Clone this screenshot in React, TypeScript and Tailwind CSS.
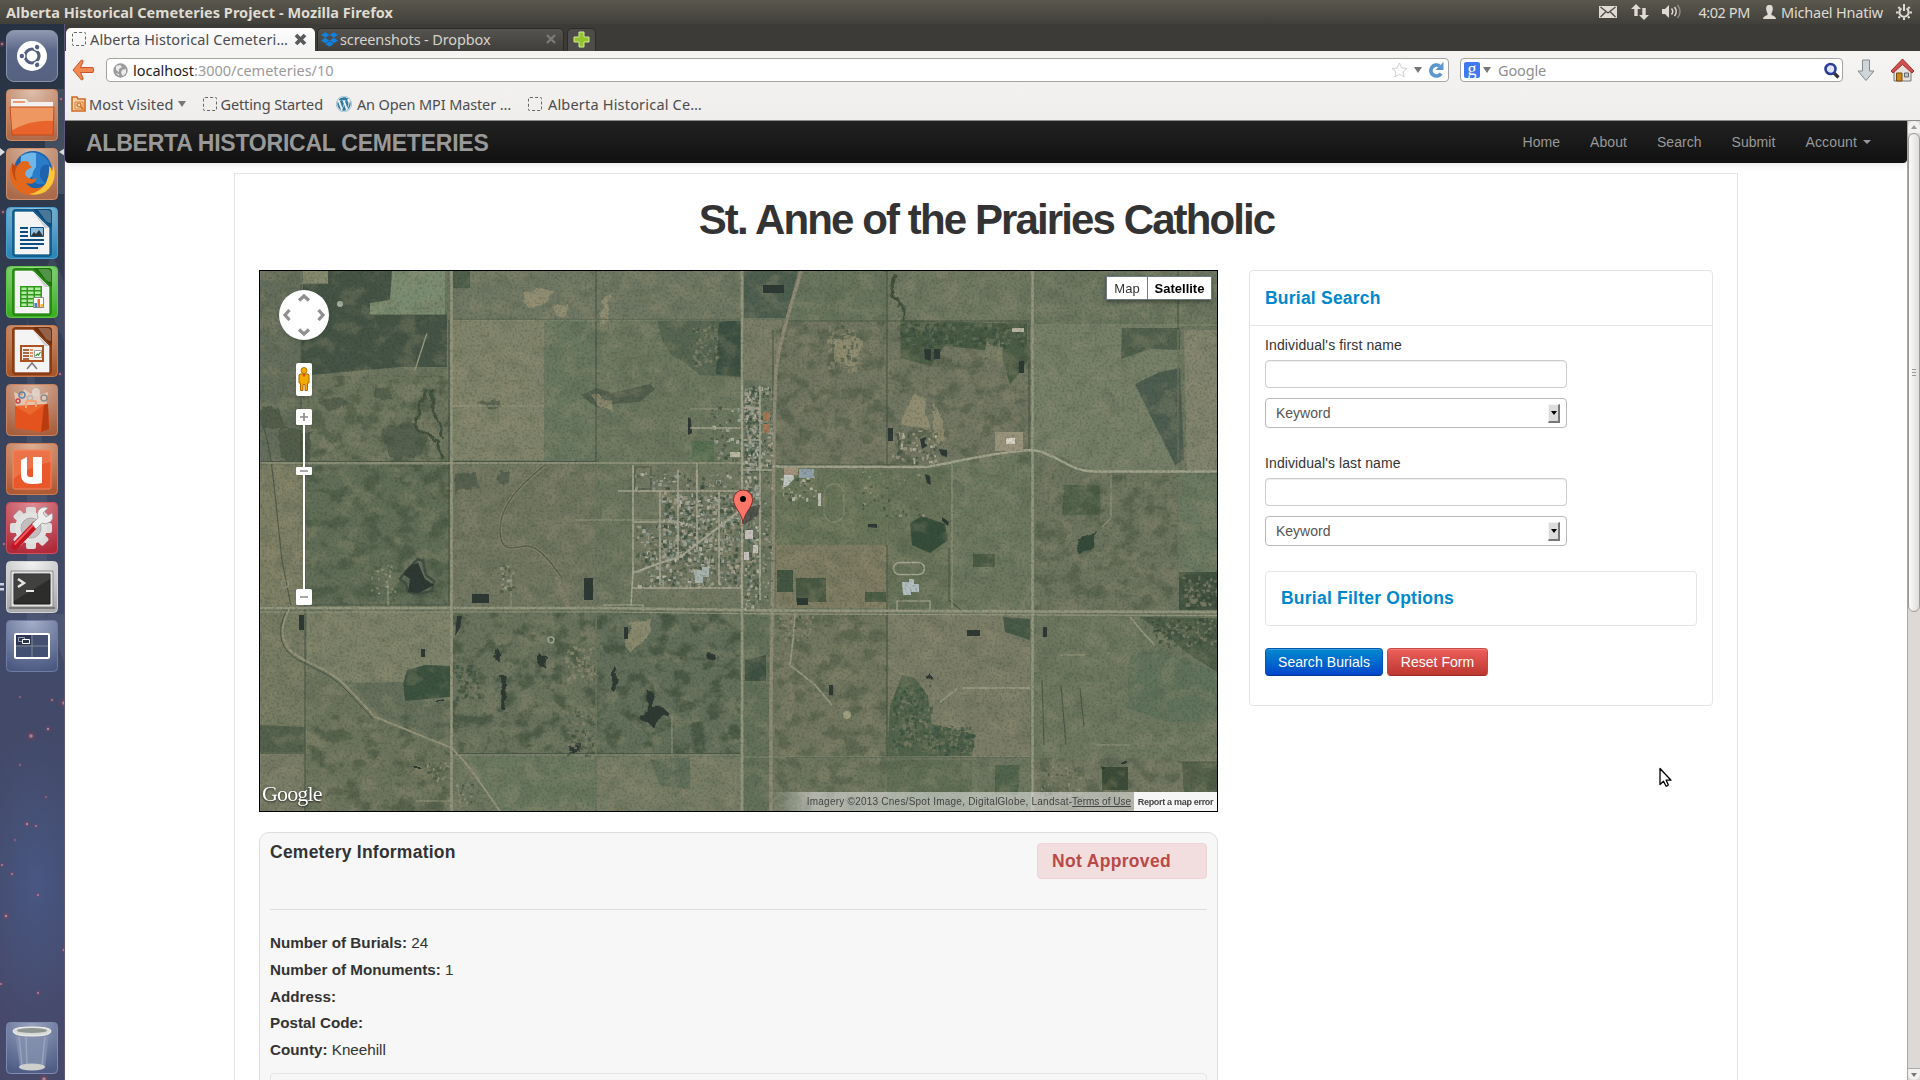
import type { ReactNode } from 'react';
import { FaDropbox, FaWordpress } from 'react-icons/fa';

/* ---------- deterministic pseudo random numbers for the aerial texture ---------- */
function rng(seed: number) {
  let s = seed;
  return () => {
    s = (s * 1664525 + 1013904223) % 4294967296;
    return s / 4294967296;
  };
}

type Blob = { x: number; y: number; w: number; h: number; c: string };

function scatter(seed: number, n: number, x0: number, y0: number, x1: number, y1: number, colors: string[], max = 4): Blob[] {
  const r = rng(seed);
  return Array.from({ length: n }, () => ({
    x: x0 + r() * (x1 - x0),
    y: y0 + r() * (y1 - y0),
    w: 1.2 + r() * (max - 1.2),
    h: 1.2 + r() * (max - 1.2),
    c: colors[Math.floor(r() * colors.length)],
  }));
}

const town = ['#c9c8c0', '#a9aba2', '#8f8f80', '#34483a', '#2f4235', '#3f5543', '#b3a796', '#8fa09c', '#4b5a48'];
const houses: Blob[] = [
  ...scatter(7, 520, 661, 493, 741, 560, town, 4),
  ...scatter(11, 190, 634, 525, 690, 586, town, 4),
  ...scatter(12, 110, 690, 555, 741, 586, town, 4),
  ...scatter(13, 70, 634, 471, 741, 491, town, 4),
  ...scatter(17, 330, 744, 386, 760, 470, town, 4),
  ...scatter(18, 60, 762, 386, 771, 470, town, 4),
  ...scatter(19, 170, 744, 471, 758, 608, town, 4),
  ...scatter(23, 50, 762, 471, 771, 608, town, 3),
  ...scatter(29, 40, 710, 405, 740, 462, town, 4),
  ...scatter(31, 70, 892, 430, 935, 462, ['#c9c2b0', '#39493b', '#a9a08c', '#7d7a66'], 4),
  ...scatter(37, 50, 780, 468, 815, 500, ['#c9c8c0', '#34483a', '#a9a08c'], 4),
  ...scatter(41, 50, 855, 470, 925, 515, ['#a39b84', '#34483a', '#56704f', '#7f8068'], 3.5),
  ...scatter(43, 30, 370, 565, 396, 595, ['#a9aba2', '#3f4f3f', '#8f8f70'], 3),
  ...scatter(47, 25, 500, 563, 512, 590, ['#a9aba2', '#3f4f3f', '#8f8f70'], 4),
  ...scatter(53, 60, 776, 615, 812, 640, ['#8f8c78', '#3f4f3f', '#7f8068'], 3),
  ...scatter(59, 30, 425, 762, 450, 780, ['#9f9582', '#3f4f3f', '#7f7f66'], 3),
  ...scatter(61, 30, 454, 775, 472, 805, ['#9f9582', '#3f4f3f', '#7f7f66'], 3),
  ...scatter(67, 50, 1040, 765, 1080, 795, ['#928f7c', '#3f4f3f', '#777a60'], 3),
  ...scatter(71, 80, 827, 325, 860, 370, ['#8f896e', '#85856b', '#4b5b46'], 5),
  ...scatter(73, 70, 690, 325, 716, 365, ['#84846b', '#777a64', '#3f4f3f'], 4),
  ...scatter(79, 160, 1150, 618, 1216, 645, ['#2f4232', '#3a4d3a', '#7b7c66'], 4),
  ...scatter(83, 160, 1182, 575, 1217, 607, ['#2b3f2f', '#38493a', '#7b7b66'], 4),
  ...scatter(89, 160, 892, 685, 930, 750, ['#2f4a38', '#3a503d', '#75775f'], 4),
  ...scatter(97, 130, 930, 725, 973, 752, ['#2f4a38', '#3a503d', '#75775f'], 4),
  ...scatter(101, 80, 453, 665, 480, 700, ['#35493a', '#3f5543', '#75775f'], 4),
  ...scatter(103, 60, 565, 645, 594, 678, ['#84836b', '#4f5f4c', '#8f8a72'], 4),
  ...scatter(107, 60, 565, 710, 594, 760, ['#84836b', '#3c4c3c', '#777a64'], 4),
  ...scatter(109, 200, 900, 322, 1026, 345, ['#2f4634', '#3d523f', '#5f6c56'], 5),
];

const fields: [string, string][] = [
  ['260,271 300,271 300,462 260,462', '#5f6957'],
  ['303,284 328,284 328,271 392,271 392,300 370,312 370,314 447,315 447,367 400,367 310,375 301,372', '#3b4c3e'],
  ['392,271 445,271 445,315 370,315 370,303 390,300', '#788c6f'],
  ['303,271 328,271 328,283 303,283', '#858a6d'],
  ['303,376 450,368 450,462 303,462', '#67705a'],
  ['260,465 303,465 303,606 260,606', '#7b7d62'],
  ['307,465 450,465 450,605 307,605', '#5a6852'],
  ['453,271 742,271 742,318 453,318', '#6c7561'],
  ['453,271 470,271 470,288 453,288', '#465845'],
  ['453,320 544,320 544,460 453,460', '#7e8268'],
  ['545,320 596,320 596,462 545,462', '#64745d'],
  ['597,320 742,320 742,462 597,462', '#67735c'],
  ['657,320 742,320 742,377 700,375 684,362 672,356 662,340', '#4f604c'],
  ['719,322 742,320 742,377 716,374', '#31473a'],
  ['581,395 597,388 612,393 650,384 655,389 640,402 612,404 597,408', '#4b5847'],
  ['453,465 596,465 596,605 453,605', '#6c725d'],
  ['597,465 632,465 632,605 597,605', '#66715b'],
  ['633,465 742,465 742,605 633,605', '#6d745f'],
  ['692,441 714,441 714,462 692,462', '#4e6a4c'],
  ['744,271 798,271 786,318 744,318', '#46584a'],
  ['744,320 782,320 774,380 744,380', '#767a63'],
  ['802,271 887,271 887,320 785,320', '#627059'],
  ['782,322 887,322 887,465 776,465', '#6c715d'],
  ['888,271 1031,271 1031,320 888,320', '#6c755f'],
  ['888,322 1031,322 1031,452 925,466 888,466', '#6d725e'],
  ['900,320 1027,324 1028,360 1010,385 1001,352 945,346 930,366 901,358', '#43563f'],
  ['987,338 1004,341 1001,362 984,357', '#767b61'],
  ['1034,271 1217,271 1217,324 1034,324', '#67735d'],
  ['1034,326 1178,326 1178,470 1090,470 1060,456 1034,450', '#727c65'],
  ['1122,328 1180,328 1180,350 1150,349 1121,359', '#485a47'],
  ['1135,384 1160,372 1180,368 1184,460 1175,465 1155,425', '#45574a'],
  ['1184,330 1217,330 1217,470 1187,470', '#7f826b'],
  ['776,470 887,470 887,545 776,545', '#637154'],
  ['776,545 887,545 887,608 776,608', '#7b795f'],
  ['888,470 951,468 951,608 888,608', '#616e54'],
  ['953,462 1030,452 1030,610 953,610', '#68745d'],
  ['1035,455 1085,473 1178,473 1178,610 1035,610', '#68705b'],
  ['1179,475 1217,475 1217,572 1179,572', '#67765f'],
  ['1179,572 1217,572 1217,610 1179,610', '#3a4c3a'],
  ['910,523 922,516 945,524 948,540 930,553 912,545', '#2b4432'],
  ['777,570 793,570 793,592 777,592', '#3a4f3b'],
  ['796,578 826,578 826,602 796,602', '#40523c'],
  ['865,592 886,592 886,602 865,602', '#44573f'],
  ['973,554 995,554 995,567 973,567', '#41543e'],
  ['1064,485 1100,485 1100,515 1062,515', '#4c5e47'],
  ['260,612 305,612 305,752 260,752', '#73795f'],
  ['307,612 450,612 450,700 340,680 307,660', '#7a7f66'],
  ['307,668 345,690 375,718 450,750 450,812 307,812', '#687059'],
  ['350,683 403,682 403,700 450,702 450,742 380,715', '#5f6b57'],
  ['407,670 425,665 450,666 450,697 405,701 403,684', '#324b38'],
  ['260,725 305,727 305,752 260,752', '#4b5b47'],
  ['260,754 305,754 305,812 260,812', '#777a64'],
  ['453,612 596,612 596,753 453,753', '#646e59'],
  ['597,612 742,612 742,753 597,753', '#5c6a56'],
  ['453,757 596,757 596,812 500,812 470,770', '#66755d'],
  ['597,757 742,757 742,812 597,812', '#747a62'],
  ['650,760 690,757 690,790 660,785', '#5b6b56'],
  ['744,615 769,615 769,812 744,812', '#5d6c56'],
  ['745,660 766,655 766,681 745,681', '#35493a'],
  ['775,612 886,612 886,755 775,755', '#6d725b'],
  ['888,615 1030,615 1030,757 888,757', '#787a64'],
  ['1003,617 1030,619 1030,640 1005,632', '#3d5340'],
  ['902,675 915,678 928,696 932,724 975,735 972,756 887,757 890,706', '#4b5e47'],
  ['775,758 886,758 886,812 775,812', '#69715b'],
  ['887,760 972,760 972,812 887,812', '#5c6b52'],
  ['995,765 1020,765 1018,795 995,795', '#4a5f48'],
  ['1034,615 1217,615 1217,760 1034,760', '#68735c'],
  ['1130,655 1160,650 1217,672 1217,722 1170,722 1127,708', '#5b6e58'],
  ['1140,617 1217,618 1217,672 1190,655 1165,635', '#465843'],
  ['1034,760 1217,760 1217,812 1034,812', '#6f745f'],
  ['1102,767 1128,767 1128,790 1102,790', '#31432f'],
  ['1182,762 1217,762 1217,795 1184,795', '#4f5d47'],
];

const ponds = [
  'M418,563l7,16 9,6-15,8-11-1 2-13-7-5 8-9z',
  'M472,594h17v9h-17z', 'M584,578h9v22h-9z', 'M688,417l3,2 1,14-4,2z', 'M763,285h21v8h-21z',
  'M934,349h6v10h-6z', 'M924,349h7v12l-6-2z', 'M1019,361h5v12h-5z', 'M888,428h5v13h-5z', 'M920,439l6-2 1,9-5,3z', 'M939,449l8,1v7l-6-2z',
  'M925,474l5,2 1,9-4-2z', 'M868,524l9,0 0,4-9-1z', 'M797,598h11v7h-11z', 'M942,517l7,5-1,4-6-5z',
  'M299,615h5v15h-5z', 'M457,616l5,0-2,12-5,8z', 'M421,649h4v8h-4z', 'M624,627h4v12h-4z', 'M967,630h13v6h-13z', 'M1043,627h4v10h-4z',
  'M829,685h4v10h-4z', 'M925,676l5-4 3,6-6,3z', 'M646,690l7,2 1,14 9,2 6,5-8,5-6,8-10,-4-5-4 7-8z', 'M499,675l6,1 2,14-2,20-4-2 1-20z',
  'M570,745l9-2-2,8-9,4z', 'M496,650l6,4-3,9-5-5z', 'M540,655l7,1-2,12-6-2z', 'M613,665l4,10-2,18-4-4z', 'M706,655l10-2 1,6-9,1z',
  'M435,700h9v2h-9z', 'M412,767h7v2h-7z', 'M1121,762h7v3h-7z', 'M1102,767l5,2-4,2z',
];

function Aerial() {
  const road = '#94967d';
  return (
    <svg className="block" width="957" height="540" viewBox="260 271 957 540">
      <defs>
        <filter id="blotch" x="0" y="0" width="100%" height="100%" colorInterpolationFilters="sRGB">
          <feTurbulence type="fractalNoise" baseFrequency="0.058 0.07" numOctaves="5" seed="8" />
          <feColorMatrix values="0 0 0 0 .2  0 0 0 0 .28  0 0 0 0 .2  5 0 0 0 -2.5" />
        </filter>
        <filter id="tan" x="0" y="0" width="100%" height="100%" colorInterpolationFilters="sRGB">
          <feTurbulence type="fractalNoise" baseFrequency="0.05 0.06" numOctaves="5" seed="31" />
          <feColorMatrix values="0 0 0 0 .6  0 0 0 0 .57  0 0 0 0 .45  0 4.5 0 0 -2.2" />
        </filter>
        <filter id="grain" x="0" y="0" width="100%" height="100%" colorInterpolationFilters="sRGB">
          <feTurbulence type="fractalNoise" baseFrequency="0.4" numOctaves="3" seed="3" />
          <feColorMatrix values="0 0 0 0 .12  0 0 0 0 .17  0 0 0 0 .12  4 0 0 0 -1.9" />
        </filter>
        <filter id="rough" x="-5%" y="-5%" width="110%" height="110%">
          <feTurbulence type="fractalNoise" baseFrequency="0.09" numOctaves="3" seed="5" result="n" />
          <feDisplacementMap in="SourceGraphic" in2="n" scale="9" xChannelSelector="R" yChannelSelector="G" />
        </filter>
        <linearGradient id="credit" x1="0" x2="1">
          <stop offset="0" stopColor="#f5f5f5" stopOpacity="0" />
          <stop offset=".12" stopColor="#f5f5f5" stopOpacity=".5" />
          <stop offset="1" stopColor="#f5f5f5" stopOpacity=".5" />
        </linearGradient>
      </defs>
      <rect x="260" y="271" width="957" height="540" fill="#67725c" />
      {fields.map(([p, c]) => <polygon key={p} points={p} fill={c} />)}
      <rect x="260" y="271" width="957" height="540" filter="url(#tan)" opacity=".28" />
      <rect x="260" y="271" width="957" height="540" filter="url(#blotch)" opacity=".13" />
      <g opacity=".4"><rect x="307" y="465" width="143" height="140" filter="url(#blotch)" /></g>
      <g opacity=".55"><rect x="453" y="612" width="143" height="141" filter="url(#blotch)" /></g>
      <g opacity=".6"><rect x="597" y="612" width="145" height="141" filter="url(#blotch)" /></g>
      <g opacity=".38"><rect x="307" y="715" width="143" height="96" filter="url(#blotch)" /><rect x="303" y="376" width="147" height="86" filter="url(#blotch)" /></g>
      <g opacity=".3"><rect x="1035" y="475" width="143" height="135" filter="url(#blotch)" /><rect x="776" y="322" width="255" height="143" filter="url(#blotch)" /></g>
      <g opacity=".28"><rect x="775" y="615" width="112" height="195" filter="url(#blotch)" /><rect x="1040" y="758" width="177" height="52" filter="url(#blotch)" /></g>
      <g filter="url(#rough)">
        <path d="M524,293l18-4 14,3-8,10-20,6-4-7zM550,304l16,2 3,12-12-4zM604,295l6-2-3,28-7,4zM900,425l15-33 10,8 4,28zM933,400l12,30-4,14-8-10zM590,393l22,8 2,10-16-4zM632,622l20-2-2,14-18,18-6-8zM833,340l22-4 8,10-8,20-20-3z" fill="#a09878" opacity=".65" />
        <path d="M380,430l30-8 20,14-10,20-28,4zM318,400l24-4 6,10-20,5zM374,387l15,3 5,10-18-3zM480,402l20-2 3,8-15,1zM455,475l20-2 4,14-24,6zM500,472l10,0-4,12-10-4z" fill="#3d4d3a" opacity=".6" />
        <path d="M260,405l20,4 6,20-26-2zM278,430l34,2-4,32-26-6z" fill="#43533f" opacity=".8" />
        <path d="M895,275l-3,18 12,15 0,12M427,388l-8,20-2,20 20,14 6,18M433,390l0,20 10,30" fill="none" stroke="#384836" strokeWidth="3" />
        <path d="M1080,540l16-8-2,14-14,8-4-6z" fill="#2c4333" />
      </g>
      <path d="M545,465C520,485 500,505 500,530S515,547 526,546 550,560 562,578M557,577l12,32" fill="none" stroke="#7f7d66" strokeWidth="4" />
      <path d="M545,465C520,485 500,505 500,530S515,547 526,546 550,560 562,578" fill="none" stroke="#4f5a48" strokeWidth="1.4" />
      <path d="M418,559l5,2 3,14 8,6-2,10-14,3-10-2-2-8-6-5 8-10z" fill="none" stroke="#38463a" strokeWidth="2.5" />
      <g filter="url(#rough)">{ponds.slice(22).map((d) => <path key={d} d={d} fill="#222d2b" />)}</g>
      {ponds.slice(0, 22).map((d) => <path key={d} d={d} fill="#222d2b" />)}

      <g fill="none" stroke="#3d4a3b" strokeWidth="1.2" opacity=".8">
        <path d="M301,284V462M305,465V811M449,320V605M596,271V462M596,465V811M887,271V465M887,545V757M1178,271V610M260,461.5H596M453,319.5H742M785,321H1030M453,753.5H742M785,757.5H1030M307,605H450M370,315H447M260,753H305M1178,762H1217M773,330V465M1029,325V450M949,548V600L962,611M635,467h16v22h-16zM777,465H900" />
        <path d="M262,424C272,445 275,500 282,560L291,606M1042,680l2,65M1061,685l5,60M1080,688l4,38" />
      </g>
      <path d="M291,606C280,625 280,638 290,650S330,668 348,688L375,717L452,748L470,768L500,811" fill="none" stroke="#939177" strokeWidth="2" />
      <path d="M289,606C278,625 278,640 288,652S328,670 346,690L373,719" fill="none" stroke="#3f4d3d" strokeWidth="1" />

      <g fill="none" stroke={road}>
        <path d="M451.5,271V811M742,271V811M1032.5,271V811" strokeWidth="2.6" />
        <path d="M801,271C795,295 781,330 776,370L774,420L773,560L771,700V811" strokeWidth="3.4" stroke="#8d8873" />
        <path d="M260,463H742" strokeWidth="1.6" />
        <path d="M742,463.5L780,466.5L925,467C960,462 990,452 1033,450C1058,454 1068,471 1094,471.5H1217" strokeWidth="2.4" stroke="#a3a48c" />
        <path d="M260,608H600L780,610.5L1217,612" strokeWidth="2.6" />
        <path d="M260,612H600L780,614L1217,615.5" strokeWidth="1.2" />
        <path d="M1034,325H1217M453,320H742M596,465V811M1178,330V610M453,755H742M740,757H1030" strokeWidth=".9" opacity=".7" />
        <path d="M952,460V608M1111,475V518L1102,527M672,716V754M388,580V605M511,575V608M453,406H544M690,409H740M575,520H740" strokeWidth="1" />
        <path d="M795,614L793,640L790,665L800,673L815,685L832,705M963,688H1030M958,688L940,702M1130,617L1145,635L1155,645" strokeWidth="1.8" />
        <path d="M415,370L427,333" strokeWidth="1.4" />
        <path d="M416,801H450M1060,655h25M1095,745h35" strokeWidth="1" />
      </g>
      <g>{houses.map((b, i) => <rect key={i} x={b.x} y={b.y} width={b.w} height={b.h} fill={b.c} opacity=".75" />)}</g>
      <g fill="none" stroke="#a9a793">
        <path d="M633,465V572L631,605M660,491V585M678,470V560M697,470V550M719,491V585M760,385V600M742,385V608" strokeWidth="1.6" />
        <path d="M618,491H742M633,522H680M633,588H742M742,470H772M697,463V491M742,408H760M742,440H760M690,428h50" strokeWidth="1.3" />
        <path d="M633,573L660,563L680,557L742,509" strokeWidth="2.2" />
        <path d="M603,605h40v6M897,611v-10h33v10" strokeWidth="1.2" />
        <rect x="893.5" y="562.5" width="31" height="12" rx="6" strokeWidth="1.6" />
        <rect x="824" y="484" width="20" height="38" rx="10" strokeWidth="1.3" opacity=".35" />
      </g>
      <g>
        <path d="M799,469h15v9h-15z" fill="#8ea2ab" /><path d="M784,475h10v4l-8,8h-3z" fill="#c8ccc9" /><path d="M784,468h14v7h-14z" fill="#a4927c" />
        <path d="M818,493h3v13h-3z" fill="#c4c5bd" /><path d="M995,432h28v19h-28z" fill="#9a927b" /><path d="M1006,438h9v6h-9z" fill="#dedace" />
        <path d="M902,582h7v-3h5v5h5v8h-8v3h-8z" fill="#b4c2c6" /><path d="M764,412h6v9h-6zM763,424h7v9h-7z" fill="#a5744f" />
        <path d="M694,570h8v-3h7v10h-6v6h-8z" fill="#a9b4b0" /><path d="M745,530h8v9h-8zM744,552h5v8h-5zM753,545h5v8h-5z" fill="#cfc5c2" />
        <path d="M746,508l14-3-2,10-14,10z" fill="#3b3c3b" opacity=".8" />
        <circle cx="847" cy="715" r="4" fill="#a0a183" /><circle cx="340" cy="304" r="3" fill="#a9b3a0" />
        <path d="M1012,328h12v4h-12zM730,452h10v5h-10z" fill="#bdb9a5" /><circle cx="551" cy="640" r="3" fill="none" stroke="#a3ab95" strokeWidth="1.4" />
        <circle cx="285" cy="584" r="3.5" fill="none" stroke="#8b8f7b" strokeWidth="1.4" />
      </g>
      <rect x="260" y="271" width="957" height="540" fill="#99a08a" opacity=".1" />
      <rect x="260" y="271" width="957" height="540" filter="url(#grain)" opacity=".17" />
      <rect x="770" y="792" width="364" height="19" fill="url(#credit)" />
    </svg>
  );
}

function MapControls() {
  return (
    <svg className="absolute left-[15px] top-[15px] drop-shadow" width="60" height="325" viewBox="275 286 60 325">
      <circle cx="304" cy="315" r="25" fill="#fff" />
      <g fill="none" stroke="#8f8f8f" strokeWidth="3.2">
        <path d="M299,300.5l5-4.5 5,4.5M299,329.5l5,4.5 5-4.5M289.5,310l-4.5,5 4.5,5M318.5,310l4.5,5-4.5,5" />
      </g>
      <rect x="296" y="363" width="16" height="33" rx="2" fill="#fff" />
      <circle cx="304" cy="370.5" r="3" fill="#f2a900" stroke="#b06a00" strokeWidth=".9" />
      <path d="M300,374h8l1,1v8h-1.5v7.5h-2.5v-6h-2v6h-2.5v-7.5h-1.5v-8z" fill="#f2a900" stroke="#b06a00" strokeWidth="1" />
      <path d="M302,374h4l-2,3z" fill="#d05a10" />
      <path d="M303,425h2v165h-2z" fill="#fff" />
      <rect x="296" y="409" width="16" height="16" rx="1.5" fill="#fff" />
      <rect x="296" y="589" width="16" height="16" rx="1.5" fill="#fff" />
      <rect x="296" y="467" width="16" height="8" rx="1" fill="#fff" />
      <path d="M300,417h8M304,413v8M300,597h8M300,471h8" stroke="#8a8a8a" strokeWidth="1.7" />
    </svg>
  );
}

function Marker() {
  return (
    <svg className="absolute left-[472px] top-[218px]" width="22" height="36" viewBox="0 0 22 36">
      <path d="M11,35C10.5,24 1.5,19 1.5,10.5a9.5,9.5 0 0 1 19,0C20.5,19 11.5,24 11,35z" fill="#fe7569" stroke="#7a2f29" strokeWidth="1" />
      <circle cx="11" cy="10" r="3" fill="#000" />
    </svg>
  );
}

/* ---------- launcher ---------- */
function Tile({ from, to, edge, children }: { from: string; to: string; edge: string; children: ReactNode }) {
  const id = `t${from.slice(1)}${to.slice(1)}`;
  return (
    <svg className="block shrink-0" width="52" height="52" viewBox="0 0 52 52">
      <defs>
        <radialGradient id={id} cx=".5" cy="0" r="1">
          <stop offset="0" stopColor={from} />
          <stop offset="1" stopColor={to} />
        </radialGradient>
      </defs>
      <rect x=".5" y=".5" width="51" height="51" rx="4" fill={`url(#${id})`} stroke={edge} />
      {children}
    </svg>
  );
}

function Sheet({ dark, deep, children }: { dark: string; deep: string; children: ReactNode }) {
  return (
    <>
      <rect x="6" y="2" width="40" height="48" rx="4" fill={dark} />
      <path d="M27,2h15q4,0 4,4v15z" fill={deep} />
      <path d="M32,3h9q4,0 4,4v9q-3,0-5-2z" fill="#fff" opacity=".25" />
      <path d="M9,5h18l16,16v26H9z" fill="#f4f4f4" stroke="#fff" strokeWidth=".6" />
      <path d="M27,5l16,16h-4z" fill="#cfcfcf" />
      {children}
    </>
  );
}

const stars = [
  [31, 712, 3], [48, 705, 2], [51, 41, 3], [2, 20, 2], [27, 800, 2], [36, 802, 1.5], [12, 850, 1.6], [6, 892, 2.2], [38, 871, 1.6],
  [38, 969, 1.8], [52, 676, 1.5], [20, 673, 1.2], [2, 841, 1.6], [20, 741, 1.2], [3, 188, 1.8], [60, 350, 1.8], [61, 75, 1.5],
  [46, 773, 1.2], [64, 679, 3], [44, 1055, 3], [15, 816, 1.3], [4, 520, 1.6], [1, 960, 1.6], [64, 926, 2],
];

function Launcher() {
  return (
    <aside className="relative flex w-[65px] shrink-0 flex-col items-start overflow-hidden border-r border-[#5d5780] bg-linear-to-b from-[#263241] via-[#414a68] via-55% to-[#47496b] pb-[6px] pl-[6px] pt-[6px]">
      <svg className="absolute left-0 top-0" width="65" height="1056" viewBox="0 0 65 1056">
        <defs>
          <radialGradient id="neb"><stop offset="0" stopColor="#4a5f92" stopOpacity=".6" /><stop offset="1" stopColor="#4a5f92" stopOpacity="0" /></radialGradient>
        </defs>
        <path d="M20,65h45v105H45v-60z" fill="#8a95a5" opacity=".25" />
        <path d="M27,290h25l13,30v-60l-13-30zM27,290v320h20v-150zM45,590h20v50z" fill="#8a95a5" opacity=".15" />
        <ellipse cx="36" cy="860" rx="60" ry="150" fill="url(#neb)" />
        {stars.map(([x, y, r]) => (
          <g key={`${x}-${y}`}>
            <circle cx={x} cy={y} r={r * 1.5} fill="#9a3f5a" opacity=".3" />
            <circle cx={x} cy={y} r={r * 0.6} fill="#d9b0b4" opacity=".6" />
          </g>
        ))}
        <path d="M0,124l5,4-5,4zM65,124l-6,4 6,4z" fill="#d8dade" />
        <path d="M0,559h4v2.5H0zM0,564h4v2.5H0z" fill="#cfd3dc" />
      </svg>
      <div className="relative flex h-full flex-col gap-[7px]">
        <div className="flex size-[52px] shrink-0 items-center justify-center rounded-lg border border-[#8a93ad] bg-linear-to-b from-[#8f98b0] via-[#5b6788] via-40% to-[#566180]">
          <div className="flex size-[30px] items-center justify-center rounded-full bg-white">
            <svg width="30" height="30" viewBox="0 0 30 30">
              <circle cx="15" cy="15" r="7" fill="none" stroke="#55607e" strokeWidth="3.2" />
              {[180, 60, -60].map((a) => (
                <g key={a} transform={`rotate(${a} 15 15)`}>
                  <circle cx="25" cy="15" r="3.4" fill="#fff" />
                  <circle cx="25.2" cy="15" r="2.2" fill="#55607e" />
                </g>
              ))}
            </svg>
          </div>
        </div>

        <Tile from="#dfc1ae" to="#b06a48" edge="#d08a66">
          <path d="M5,10h15l3,3h24v12H5z" fill="#f3f0ee" />
          <path d="M7,12h12v2H7z" fill="#ec9a72" />
          <path d="M4,18h44l-1,28H6z" fill="#e8642c" />
          <path d="M4,18h44l-.5,14Q25,30 5,42z" fill="#f2a871" opacity=".75" />
          <path d="M4,18h44l-1,28H6z" fill="none" stroke="#c24a17" />
        </Tile>

        <Tile from="#d9b59d" to="#a9694a" edge="#cf8f6b">
          <circle cx="27" cy="22" r="19" fill="#1d62ad" />
          <path d="M15,8q12-8 24,2-6,2-8,6 4,6 2,12-8-2-10,4-10-6-8-24z" fill="#6fb6ea" />
          <path d="M30,5q10,2 14,12-8-2-10,6t6,12q-10,4-14-4 0-8 4-12z" fill="#2a7bc8" />
          <path d="M47,14q6,20-8,30-18,8-30-4Q0,28 6,15q2,3 5,3 5-7 12-4-1,3 3,5l-5,3q-3,3-1,6 4,5 11,2-3,8-11,5 6,8 16,4 10-6 7-20 3,2 3,6 2-3 1-11z" fill="#e3681c" />
          <path d="M47,14q6,20-8,30-8,4-16,2 12-2 17-11 4-8 3-17 3,2 3,6 2-4 1-10z" fill="#fbc638" />
          <path d="M6,15q2,3 5,3-4,8 0,16-6-6-5-19z" fill="#c24a12" />
        </Tile>

        <Tile from="#9cc7de" to="#2e86b9" edge="#4ba0d0">
          <Sheet dark="#155f8f" deep="#0d4a78">
            <path d="M14,21h8M14,25h8M14,29h8M14,33h24M14,37h24M14,41h18" stroke="#0d4f80" strokeWidth="2" />
            <path d="M24.5,20.5h13v9h-13z" fill="#8ec0de" stroke="#0d4f80" /><path d="M25,29l3-4 2,2 3-4 4,6z" fill="#333" />
          </Sheet>
        </Tile>

        <Tile from="#a6e09a" to="#3fae27" edge="#5cc845">
          <Sheet dark="#278a12" deep="#1a6f0a">
            <path d="M14,20h22v21H14z" fill="#2f9a1a" />
            <path d="M15.5,21.5h5v2.5h-5zM22,21.5h5.5v2.5H22zM29,21.5h5.5v2.5H29zM15.5,25.5h5V28h-5zM22,25.5h5.5V28H22zM29,25.5h5.5V28H29zM15.5,29.5h5V32h-5zM22,29.5h5.5V32H22zM29,29.5h5.5V32H29zM15.5,33.5h5V36h-5zM22,33.5h5.5V36H22zM15.5,37.5h5V40h-5zM22,37.5h5.5V40H22z" fill="#b5eaa5" />
            <path d="M27.5,31.5h10v10h-10z" fill="#fff" stroke="#888" /><path d="M28.5,37h2.5v4h-2.5z" fill="#3b7fc4" /><path d="M31.5,33h2.5v8h-2.5z" fill="#e8702a" /><path d="M34.5,38h2.5v3h-2.5z" fill="#f2c12e" />
          </Sheet>
        </Tile>

        <Tile from="#d9a98a" to="#a8572a" edge="#c77a4d">
          <Sheet dark="#8a3d12" deep="#6f2e0b">
            <path d="M15,21h22v15H15z" fill="#f7efe9" stroke="#b0521f" strokeWidth="2" />
            <path d="M17,25h6M17,28h6M17,31h6M17,34h6" stroke="#8a3d12" strokeWidth="1.6" /><path d="M24,25h3M24,28h3M24,31h3" stroke="#e2703a" strokeWidth="1.6" />
            <path d="M28.5,25.5h7v7h-7z" fill="#fff" stroke="#888" strokeWidth=".8" /><path d="M29.5,31l2-2 1,1 2-3" stroke="#2a9a2a" strokeWidth="1.2" fill="none" />
            <path d="M21,44l5-6 5,6" fill="none" stroke="#777" strokeWidth="1.5" />
          </Sheet>
        </Tile>

        <Tile from="#d7b4a0" to="#a85f3e" edge="#c98560">
          <path d="M10,22L8,8l8,4 2-7 7,5 5-6 4,7 8-3-2,14z" fill="#f7e6d8" opacity=".6" />
          <g fill="none" strokeWidth="1.5">
            <circle cx="16" cy="11" r="3" stroke="#5b87a8" /><circle cx="30" cy="8" r="3" stroke="#d8d8d8" /><circle cx="38" cy="14" r="3" stroke="#8b8b8b" /><circle cx="24" cy="14" r="2.5" stroke="#b5b5b5" /><circle cx="12" cy="17" r="2" stroke="#c44" />
          </g>
          <path d="M9,22l33-2 1,25-8,3-26-4z" fill="#e4521d" />
          <path d="M42,20l1,25-8,3 3-27z" fill="#b93b10" />
          <path d="M9,22l29-1-14,10z" fill="#f07a3a" opacity=".6" />
          <path d="M20,24v-5q0-2 2-2h6q2,0 2,2v4" fill="none" stroke="#f6a36f" strokeWidth="2" />
        </Tile>

        <Tile from="#dfb196" to="#ae5a34" edge="#cf7d55">
          <rect x="7" y="7" width="38" height="39" rx="2" fill="#e9582b" stroke="#f0845c" />
          <path d="M7,7h38v12Q26,22 7,36z" fill="#f7a37d" opacity=".35" />
          <path d="M15,17l6-3v17q0,3 3,3h3V14h9v26q-4,1-10,1-11,0-11-9z" fill="#fff" />
        </Tile>

        <Tile from="#dd8f96" to="#b02a3a" edge="#d2505e">
          <g transform="translate(25 26)">
            {[0, 45, 90, 135].map((a) => <rect key={a} x="-5" y="-21" width="10" height="42" rx="2" fill="#dcdcdc" transform={`rotate(${a})`} />)}
            <circle r="16" fill="#e2e2e2" /><circle r="10" fill="#c4bdbd" stroke="#a9a9a9" />
          </g>
          <path d="M9,44L29,23" stroke="#c41420" strokeWidth="7" strokeLinecap="round" />
          <path d="M9,42L27,23" stroke="#ee5a5f" strokeWidth="2" strokeLinecap="round" />
          <path d="M26,22l6-6q-2-7 3-10 4-2 7,0l-5,5 3,4 6-4q2,6-2,9-4,3-8,1l-6,6z" fill="#eee" stroke="#999" strokeWidth=".8" />
        </Tile>

        <Tile from="#f2f2f2" to="#a9abac" edge="#d4d4d4">
          <path d="M5,10h42v36H5z" fill="#e2e2e2" stroke="#8c8c8c" /><path d="M3,46h46v2H3z" fill="#777" />
          <path d="M8,13h36v30H8z" fill="#2d2d2b" stroke="#1a1a1a" /><path d="M8,13h36v5L8,40z" fill="#555" opacity=".5" />
          <path d="M12,18l6,4-6,4" fill="none" stroke="#e8e8e8" strokeWidth="2.4" /><path d="M20,30h8" stroke="#e8e8e8" strokeWidth="2" />
        </Tile>

        <Tile from="#a5afc9" to="#4c5981" edge="#6f7ba3">
          <rect x="9" y="14" width="34" height="24" rx="1" fill="#435071" stroke="#fff" strokeWidth="2" />
          <path d="M26,15v22M10,26h32" stroke="#808896" />
          <path d="M10,15h15v10H10z" fill="#2c3650" />
          <path d="M12.5,17.5h6v4h-6z" fill="none" stroke="#9aa2b4" /><path d="M16.5,19.5h7v4h-7z" fill="#2c3650" stroke="#fff" />
        </Tile>

        <div className="mt-auto">
          <Tile from="#98a3bf" to="#4f5d86" edge="#7f8bb0">
            <path d="M9,12h34l-4,34q-13,4-25,0z" fill="#8390ad" opacity=".8" />
            <path d="M13,15l3,28M20,15l1,29M39,15l-3,28" stroke="#a9b4ca" strokeWidth="1.5" opacity=".6" />
            <ellipse cx="26" cy="45" rx="13" ry="3.5" fill="#cfd0ce" />
            <path d="M7,9q0,5 19,5t19-5q0-4-19-4T7,9z" fill="#d9d9d6" stroke="#f2f2f0" /><ellipse cx="26" cy="8.5" rx="15" ry="2.5" fill="#8f9691" />
          </Tile>
        </div>
      </div>
    </aside>
  );
}

/* ---------- desktop panel ---------- */
function TopPanel() {
  return (
    <header className="flex h-6 shrink-0 items-center bg-linear-to-b from-[#5b594d] to-[#403f3a] pl-[6px] pr-[8px] pb-px font-['Noto_Sans',sans-serif] text-[14.5px] leading-5 text-[#dfdbd2]">
      <span className="font-bold tracking-[0.036px]">Alberta Historical Cemeteries Project - Mozilla Firefox</span>
      <div className="ml-auto flex items-center">
        <svg width="18" height="12" viewBox="0 0 18 12"><path d="M0,0h18v12H0z" fill="#dfdbd2" /><path d="M1.5,1l7.5,6 7.5-6M1.5,11L7,5.5M16.5,11L11,5.5" stroke="#4b4a43" strokeWidth="1.3" fill="none" /></svg>
        <svg className="ml-[14px]" width="18" height="16" viewBox="0 0 18 16" fill="#dfdbd2"><path d="M5,0l5,5H6.7v7H3.3V5H0zM13,16l-5-5h3.3V4h3.4v7H18z" /></svg>
        <svg className="ml-[13px]" width="21" height="15" viewBox="0 0 21 15"><path d="M0,5h3l4-4v13l-4-4H0z" fill="#dfdbd2" /><path d="M9.5,4.5q2.5,3 0,6M12.5,3q3.5,4.5 0,9" fill="none" stroke="#dfdbd2" strokeWidth="1.5" /><path d="M15.5,1q5,6.5 0,13" fill="none" stroke="#8d8a80" strokeWidth="1.5" /></svg>
        <span className="ml-[15px] tracking-[-0.42px]">4:02 PM</span>
        <svg className="ml-[13px]" width="13" height="14" viewBox="0 0 13 14" fill="#dfdbd2"><path d="M6.5,0C9.5,0 10,2 9.8,4.5 9.5,7 8.5,8 8.5,8.5V10q4.5,1.5 4.5,4H0q0-2.5 4.5-4V8.5C4.5,8 3.5,7 3.2,4.5 3,2 3.5,0 6.5,0z" /></svg>
        <span className="ml-[5px] tracking-[-0.2px]">Michael Hnatiw</span>
        <svg className="ml-[13px]" width="16" height="16" viewBox="0 0 16 16" fill="none" stroke="#dfdbd2">
          <path d="M5.5,4.3a4.6,4.6 0 1 0 5,0" strokeWidth="2" /><path d="M8,0v7" strokeWidth="2" />
          <path d="M2.3,3l1.5,1.5M13.7,3l-1.5,1.5M0,8.5h2.5M16,8.5h-2.5M2.5,14l1.5-1.7M13.5,14L12,12.3M8,16v-2.5" strokeWidth="2" />
        </svg>
      </div>
    </header>
  );
}

function BlankIcon() {
  return <span className="block size-[14px] rounded-[2px] border border-dashed border-[#666]" />;
}

function Down() {
  return <svg width="8" height="6" viewBox="0 0 8 6"><path d="M0,0h8L4,6z" fill="#777" /></svg>;
}

function BrowserChrome() {
  return (
    <div className="shrink-0 font-['Noto_Sans',sans-serif] text-[14.5px] text-[#4c4c4c]">
      <div className="flex h-[27px] items-end bg-[#3c3b37] pl-px leading-[21px]">
        <div className="flex h-[23px] w-[249px] items-center rounded-t-[5px] bg-linear-to-b from-[#fdfdfd] to-[#f4f3f2] pb-px pl-[6px]">
          <BlankIcon />
          <span className="ml-1 tracking-[0.118px]">Alberta Historical Cemeteri…</span>
          <svg className="ml-[6px]" width="13" height="13" viewBox="0 0 13 13"><path d="M2,2l9,9M11,2l-9,9" stroke="#5a5a5a" strokeWidth="3.8" /></svg>
        </div>
        <div className="ml-[2px] flex h-[23px] w-[247px] items-center rounded-t-[5px] border border-b-0 border-[#2c2b28] bg-linear-to-b from-[#545350] to-[#403f3c] pb-[2px] pl-[3px] text-[#d6d3cb]">
          <FaDropbox size={17} color="#1081de" />
          <span className="ml-[2px] tracking-[-0.12px]">screenshots - Dropbox</span>
          <svg className="ml-auto mr-[6px]" width="12" height="12" viewBox="0 0 12 12"><path d="M2,2l8,8M10,2l-8,8" stroke="#7b7a77" strokeWidth="2.4" /></svg>
        </div>
        <div className="ml-[3px] flex h-[23px] w-[29px] items-center justify-center rounded-t-[5px] border border-b-0 border-[#2c2b28] bg-[#4d4c49] pb-[2px]">
          <svg width="17" height="17" viewBox="0 0 17 17"><path d="M6,1h5v5h5v5h-5v5H6v-5H1V6h5z" fill="#93c32c" stroke="#d4ea9a" /></svg>
        </div>
      </div>

      <div className="h-[70px] border-b border-[#8e8c88] bg-linear-to-b from-[#f5f4f3] to-[#efeeed] pt-[7px]">
        <div className="flex h-6 items-center pl-[7px] leading-5">
          <svg width="23" height="22" viewBox="0 0 23 22"><path d="M1,11L9.5,1q2,0 1.5,2L8.5,8.5H21q1.5,2.5 0,5H8.5l2.5,5.500q.5,2-1.5,2z" fill="#f0894f" stroke="#c9532a" strokeLinejoin="round" /></svg>
          <div className="ml-[11px] flex h-6 w-[1343px] items-center rounded-[4px] border border-[#a5a39f] bg-white pl-[6px] pr-[4px]">
            <svg width="15" height="15" viewBox="0 0 15 15"><circle cx="7.5" cy="7.5" r="7.2" fill="#9c9c9c" /><path d="M3,3l4-1 2,2-3,2 0,3-3-2zM9,7l4-1 0,4-3,3-2-3zM3,10l3,1 0,2z" fill="#ececec" /></svg>
            <span className="ml-[5px] text-[#1d1d1d] tracking-[-0.03px]">localhost</span><span className="text-[#9a9a9a]">:3000/cemeteries/10</span>
            <svg className="ml-auto" width="17" height="16" viewBox="0 0 17 16"><path d="M8.5,1l2.2,5 5.3.5-4,3.5 1.2,5-4.7-2.7L3.8,15 5,10 1,6.5 6.3,6z" fill="#fff" stroke="#cfcfcf" /></svg>
            <span className="ml-[6px]"><Down /></span>
            <svg className="ml-[6px]" width="16" height="16" viewBox="0 0 16 16"><path d="M13,11.5A5.5,5.5 0 1 1 11.5,4" fill="none" stroke="#5b97cf" strokeWidth="3.6" /><path d="M15.5,0v8H7.5z" fill="#5b97cf" /></svg>
          </div>
          <div className="ml-[11px] flex h-6 w-[383px] items-center rounded-[4px] border border-[#a5a39f] bg-white pl-[3px] pr-[2px]">
            <span className="flex size-4 items-center justify-center rounded-[2px] bg-[#4079f2] pb-[3px] font-['Liberation_Serif',serif] text-[18px] leading-3 text-white">g</span>
            <span className="ml-[3px]"><Down /></span>
            <span className="ml-[7px] text-[#8f8f8f] tracking-[-0.156px]">Google</span>
            <svg className="ml-auto" width="17" height="17" viewBox="0 0 17 17"><path d="M10.5,10.5l5,5" stroke="#333" strokeWidth="3.2" /><circle cx="7.5" cy="7" r="5" fill="#dde6f8" stroke="#2f3f98" strokeWidth="2.6" /></svg>
          </div>
          <svg className="ml-[14px]" width="18" height="23" viewBox="0 0 18 23"><path d="M5.5,1h7v11h4.5L9,21.5 1,12h4.5z" fill="#cfd6d9" stroke="#85898b" /></svg>
          <svg className="ml-[16px] shrink-0" width="23" height="24" viewBox="0 0 23 24"><path d="M3,11v12h17V11L11.5,4z" fill="#e6e3df" stroke="#777" /><path d="M0,13L11.5,1 23,13l-2,2-9.5-8.5L2,15z" fill="#d0524e" stroke="#a02c2c" /><path d="M5.5,15h5.5v8H5.5z" fill="#c98a1c" stroke="#7a4a08" /><path d="M13.5,15h4v4h-4z" fill="#b5c9dc" stroke="#666" /></svg>
        </div>

        <div className="mt-[12px] flex h-[20px] items-center pl-[6px] leading-5">
          <svg width="15" height="16" viewBox="0 0 15 16"><path d="M1,1h5l1,2h7v12H1z" fill="#f7d3ad" stroke="#d2691e" strokeWidth="1.6" /><path d="M4,6h8v7H4z" fill="none" stroke="#d2691e" strokeWidth=".8" /><circle cx="8" cy="9" r="2" fill="none" stroke="#d2691e" strokeWidth="1.2" /><path d="M9.5,10.5l3,3" stroke="#d2691e" strokeWidth="1.4" /></svg>
          <span className="ml-[3px] tracking-[0.096px]">Most Visited</span>
          <span className="ml-[5px]"><Down /></span>
          <span className="ml-[17px]"><BlankIcon /></span>
          <span className="ml-[3px] tracking-[-0.117px]">Getting Started</span>
          <FaWordpress className="ml-[13px]" size={16} color="#2f7ba5" />
          <span className="ml-[5px] tracking-[-0.132px]">An Open MPI Master …</span>
          <span className="ml-[17px]"><BlankIcon /></span>
          <span className="ml-[6px] tracking-[0.19px]">Alberta Historical Ce…</span>
        </div>
      </div>
    </div>
  );
}

/* ---------- page ---------- */
function NavBar() {
  return (
    <nav className="flex h-[42px] items-center rounded-b-[4px] bg-linear-to-b from-[#222] to-[#111] pl-[21px] pr-[36px] text-[14px] leading-5 text-[#999] shadow-[0_1px_8px_rgba(0,0,0,0.12)]">
      <span className="pt-[2px] text-[23px] font-bold tracking-[-0.235px]">ALBERTA HISTORICAL CEMETERIES</span>
      <div className="ml-auto flex items-center gap-[30px]">
        <span className="tracking-[0.03px]">Home</span>
        <span className="tracking-[0.08px]">About</span>
        <span className="tracking-[0.02px]">Search</span>
        <span className="tracking-[0.07px]">Submit</span>
        <span className="flex items-center gap-[6px] tracking-[0.129px]">Account<i className="block border-x-4 border-t-4 border-x-transparent border-t-[#999]" /></span>
      </div>
    </nav>
  );
}

function SelectBox() {
  return (
    <div className="mt-[10px] flex h-[30px] w-[302px] items-center rounded-[4px] border border-[#bbb] bg-white pl-[10px] pr-[6px] text-[#555]">
      <span>Keyword</span>
      <span className="ml-auto flex h-[19px] w-[12px] items-center justify-center border border-b-2 border-r-2 border-b-[#777] border-l-[#f4f4f4] border-r-[#777] border-t-[#f4f4f4] bg-[#dcdcdc]">
        <i className="block border-x-[3px] border-t-[4px] border-x-transparent border-t-black" />
      </span>
    </div>
  );
}

function NameField({ label, spacing }: { label: string; spacing: string }) {
  return (
    <div>
      <div className={spacing}>{label}</div>
      <div className="mt-[5px] h-[28px] w-[302px] rounded-[4px] border border-[#ccc] bg-white shadow-[inset_0_1px_1px_rgba(0,0,0,0.075)]" />
      <SelectBox />
    </div>
  );
}

function SearchPanel() {
  return (
    <section className="h-[436px] w-[464px] rounded-[4px] border border-[#e5e5e5]">
      <h2 className="h-[55px] border-b border-[#e5e5e5] pl-[15px] pt-[17px] text-[17.5px] font-bold leading-5 tracking-[0.22px] text-[#0088cc]">Burial Search</h2>
      <div className="px-[15px] pt-[9px]">
        <NameField label="Individual's first name" spacing="tracking-[0.12px]" />
        <div className="h-[25px]" />
        <NameField label="Individual's last name" spacing="tracking-[0.1px]" />
        <h2 className="mt-[25px] h-[55px] rounded-[4px] border border-[#e5e5e5] pl-[15px] pt-[16px] text-[17.5px] font-bold leading-5 tracking-[0.23px] text-[#0088cc]">Burial Filter Options</h2>
        <div className="mt-[22px] flex gap-1 text-white [text-shadow:0_-1px_0_rgba(0,0,0,0.25)]">
          <button className="h-[28px] w-[118px] rounded-[4px] border border-[#0055b5] border-b-[#003a95] bg-linear-to-b from-[#0088cc] to-[#0044cc] tracking-[0.068px] shadow-[inset_0_1px_0_rgba(255,255,255,0.2)]">Search Burials</button>
          <button className="h-[28px] w-[101px] rounded-[4px] border border-[#c94844] border-b-[#9c2a25] bg-linear-to-b from-[#ee5f5b] to-[#bd362f] tracking-[0.037px] shadow-[inset_0_1px_0_rgba(255,255,255,0.2)]">Reset Form</button>
        </div>
      </div>
    </section>
  );
}

function MapBox() {
  return (
    <div className="relative h-[542px] w-[959px] overflow-hidden border border-black">
      <Aerial />
      <MapControls />
      <Marker />
      <div className="absolute right-[5px] top-[5px] flex h-6 w-[106px] border border-[#717b87] bg-white text-[13px] leading-[23px] shadow-[0_2px_4px_rgba(0,0,0,0.4)]">
        <span className="w-[41px] border-r border-[#717b87] text-center text-[#333]">Map</span>
        <span className="flex-1 text-center font-bold text-black">Satellite</span>
      </div>
      <span className="absolute bottom-px left-[2px] font-['Liberation_Serif',serif] text-[22px] leading-8 tracking-[-0.85px] text-white [text-shadow:0_1px_2px_rgba(0,0,0,0.8)]">Google</span>
      <div className="absolute bottom-0 right-0 flex h-[19px] items-center text-[10px] text-[#444]">
        <span className="tracking-[0.236px]">Imagery ©2013 Cnes/Spot Image, DigitalGlobe, Landsat</span>
        <span>-</span>
        <span className="underline">Terms of Use</span>
        <span className="ml-[3px] flex h-[19px] w-[83px] items-center justify-center bg-[#f5f5f5] text-[9px] font-bold tracking-[-0.307px]">Report a map error</span>
      </div>
    </div>
  );
}

function InfoBox() {
  const rows: [string, string][] = [['Number of Burials:', '24'], ['Number of Monuments:', '1'], ['Address:', ''], ['Postal Code:', ''], ['County:', 'Kneehill']];
  return (
    <section className="mt-5 h-[400px] w-[959px] rounded-[10px] border border-[#ddd] bg-[#f7f7f7] px-[10px] pt-[9px]">
      <div className="flex h-[68px] items-start justify-between border-b border-[#dcdcdc] text-[17.5px] font-bold leading-5">
        <h2 className="tracking-[0.24px]">Cemetery Information</h2>
        <div className="mt-px h-[36px] w-[170px] rounded-[4px] border border-[#eed3d7] bg-[#f2dede] pl-[14px] pt-[7px] tracking-[0.33px] text-[#b94a48]">Not Approved</div>
      </div>
      <div className="mt-[20px] text-[15.2px] leading-[26.8px]">
        {rows.map(([k, v]) => (
          <div key={k} className="whitespace-pre"><b className="tracking-[0.02px]">{k}</b> {v}</div>
        ))}
      </div>
      <div className="mt-[9px] h-20 rounded-[4px] border border-[#e5e5e5]" />
    </section>
  );
}

function Scrollbar() {
  return (
    <div className="flex w-[13px] shrink-0 flex-col border-l border-[#a9a6a2] bg-[#dcd9d6]">
      <div className="flex h-3 items-center justify-center rounded-t-full bg-[#f2f1f0]"><i className="block border-x-[3px] border-b-4 border-x-transparent border-b-[#999]" /></div>
      <div className="flex h-[479px] flex-col items-center justify-center gap-[2px] rounded-[6px] border border-[#9d9a96] bg-linear-to-r from-[#fafafa] to-[#dfdddb]">
        <i className="h-px w-1 bg-[#999]" /><i className="h-px w-1 bg-[#999]" /><i className="h-px w-1 bg-[#999]" />
      </div>
      <div className="mt-auto flex h-3 items-center justify-center rounded-b-full border-t border-[#aaa] bg-[#f2f1f0]"><i className="block border-x-[3px] border-t-4 border-x-transparent border-t-[#777]" /></div>
    </div>
  );
}

export default function App() {
  return (
    <div className="relative flex h-[1080px] w-[1920px] flex-col overflow-hidden bg-white font-['Liberation_Sans',Arial,sans-serif] text-[14px] leading-5 text-[#333]">
      <TopPanel />
      <div className="flex min-h-0 flex-1">
        <Launcher />
        <div className="flex min-w-0 flex-1 flex-col">
          <BrowserChrome />
          <div className="flex min-h-0 flex-1 overflow-hidden">
            <main className="flex-1 overflow-hidden bg-white">
              <NavBar />
              <div className="ml-[169px] mt-[10px] h-[1000px] w-[1504px] border border-[#e5e5e5] pl-6 pt-[22px]">
                <h1 className="mb-[26px] -ml-[23px] text-center text-[42px] font-bold leading-[48px] tracking-[-1.89px]">St. Anne of the Prairies Catholic</h1>
                <div className="flex items-start gap-[31px]">
                  <div>
                    <MapBox />
                    <InfoBox />
                  </div>
                  <SearchPanel />
                </div>
              </div>
            </main>
            <Scrollbar />
          </div>
        </div>
      </div>
      <svg className="absolute left-[1659px] top-[767px]" width="14" height="21" viewBox="0 0 14 21"><path d="M1,1.5v16l3.5-3.3 2.3,4.6q1.5.6 2.5-1L7.2,13.2H12z" fill="#fff" stroke="#000" strokeWidth="1.3" strokeLinejoin="round" /></svg>
    </div>
  );
}
